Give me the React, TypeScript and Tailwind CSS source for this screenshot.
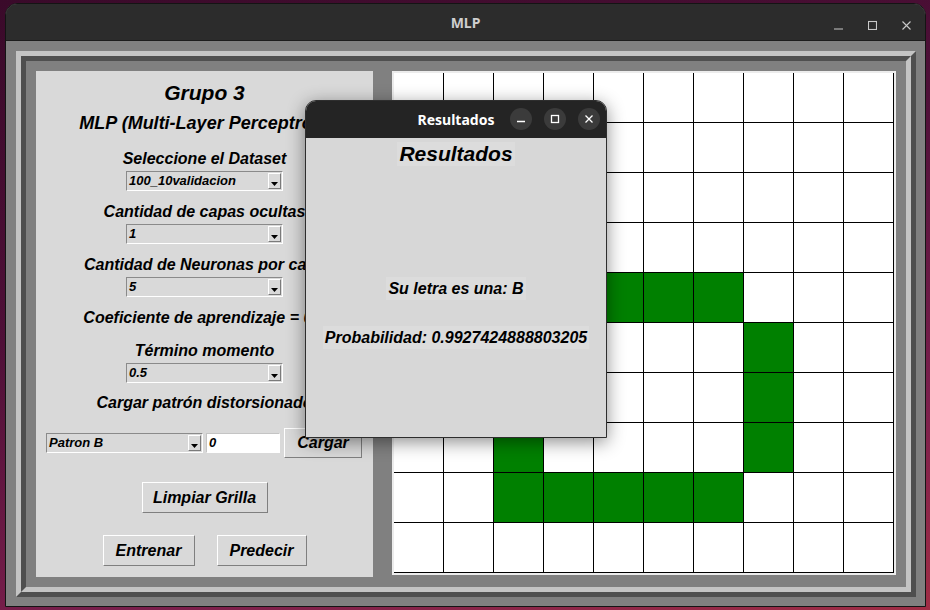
import React from "react";

const tk = "font-['Liberation_Sans',Arial,sans-serif] font-bold italic text-black";
const ui = "font-['Noto_Sans','Open_Sans',sans-serif] font-bold";

const green = new Set<string>([
  "1,2", "1,3",
  "2,2", "3,2",
  "4,2", "4,3", "4,4", "4,5", "4,6",
  "5,2", "6,2", "7,2",
  "5,7", "6,7", "7,7",
  "8,2", "8,3", "8,4", "8,5", "8,6",
]);

function Combo({ value }: { value: string }) {
  return (
    <div className="flex h-[20px] w-[157px] items-center border border-t-[#8a8a8a] border-l-[#8a8a8a] border-b-white border-r-white bg-[#d9d9d9]">
      <span className={`${tk} flex-1 pl-[2px] text-[13px] leading-[16px]`}>{value}</span>
      <div className="mr-[1px] flex h-[16px] w-[13px] items-end justify-center border border-t-white border-l-white border-b-[#7a7a7a] border-r-[#7a7a7a] pb-[2px]">
        <svg width="7" height="4" viewBox="0 0 7 4">
          <polygon points="0,0 7,0 3.5,4" fill="#000" />
        </svg>
      </div>
    </div>
  );
}

function Label({ text, className = "" }: { text: string; className?: string }) {
  return (
    <div className={`${tk} whitespace-nowrap text-center text-[16px] leading-[19px] ${className}`}>{text}</div>
  );
}

function TkButton({ text, w, h, className = "" }: { text: string; w: string; h: string; className?: string }) {
  return (
    <div
      className={`${tk} flex items-center justify-center border border-t-white border-l-white border-b-[#7f7f7f] border-r-[#7f7f7f] bg-[#d9d9d9] text-[16px] ${w} ${h} ${className}`}
    >
      {text}
    </div>
  );
}

function Grid() {
  const rows = Array.from({ length: 10 }, (_, r) => r);
  return (
    <div className="ml-[19px] h-[504px] w-[504px] border-2 border-[#ececec] bg-white">
      <div className="grid grid-cols-[repeat(10,50px)] grid-rows-[repeat(10,50px)]">
        {rows.map((r) =>
          rows.map((c) => (
            <div
              key={`${r}-${c}`}
              className={`border-b border-r border-black ${green.has(`${r},${c}`) ? "bg-[#008000]" : "bg-white"}`}
            />
          ))
        )}
      </div>
    </div>
  );
}

function LeftPanel() {
  return (
    <div className="ml-[10px] flex h-[506px] w-[337px] flex-col items-center overflow-hidden bg-[#d9d9d9]">
      <div className={`${tk} mt-[10px] text-[21px] leading-[24px]`}>Grupo 3</div>
      <div className={`${tk} mt-[8px] whitespace-nowrap text-[18px] leading-[21px]`}>MLP (Multi-Layer Perceptron)</div>

      <Label text="Seleccione el Dataset" className="mt-[15px]" />
      <div className="mt-[3px]"><Combo value="100_10validacion" /></div>

      <Label text="Cantidad de capas ocultas" className="mt-[11px]" />
      <div className="mt-[3px]"><Combo value="1" /></div>

      <Label text="Cantidad de Neuronas por capa" className="mt-[11px]" />
      <div className="mt-[3px]"><Combo value="5" /></div>

      <Label text="Coeficiente de aprendizaje = 0.1" className="mt-[11px]" />

      <Label text="Término momento" className="mt-[14px]" />
      <div className="mt-[3px]"><Combo value="0.5" /></div>

      <Label text="Cargar patrón distorsionado" className="mt-[10px]" />

      <div className="mt-[16px] flex w-full items-center pl-[10px]">
        <Combo value="Patron B" />
        <div className="ml-[3px] flex h-[20px] w-[74px] items-center border border-t-[#c4c4c4] border-l-[#c4c4c4] border-b-white border-r-white bg-white">
          <span className={`${tk} pl-[2px] text-[13px]`}>0</span>
        </div>
        <TkButton text="Cargar" w="w-[78px]" h="h-[30px]" className="ml-[4px]" />
      </div>

      <TkButton text="Limpiar Grilla" w="w-[126px]" h="h-[31px]" className="mt-[24px]" />

      <div className="mt-[22px] flex gap-[22px]">
        <TkButton text="Entrenar" w="w-[92px]" h="h-[31px]" />
        <TkButton text="Predecir" w="w-[90px]" h="h-[31px]" />
      </div>
    </div>
  );
}

function Popup() {
  return (
    <div className="absolute left-[305px] top-[100px] flex h-[338px] w-[302px] flex-col overflow-hidden rounded-t-[11px] border border-[#2e2e2e] bg-[#d7d7d7] shadow-[0_4px_18px_rgba(0,0,0,0.45)]">
      <div className="relative flex h-[37px] shrink-0 items-center justify-center bg-[#242424]">
        <span className={`${ui} text-[14px] text-white`}>Resultados</span>
        <div className="absolute right-[6px] top-[7px] flex gap-[12px]">
          <div className="flex h-[22px] w-[22px] items-center justify-center rounded-full bg-[#3b3b3b]">
            <svg width="10" height="10" viewBox="0 0 10 10"><line x1="1" y1="7.5" x2="9" y2="7.5" stroke="#fff" strokeWidth="1.3" /></svg>
          </div>
          <div className="flex h-[22px] w-[22px] items-center justify-center rounded-full bg-[#3b3b3b]">
            <svg width="10" height="10" viewBox="0 0 10 10"><rect x="1.5" y="1.5" width="7" height="7" fill="none" stroke="#fff" strokeWidth="1.3" /></svg>
          </div>
          <div className="flex h-[22px] w-[22px] items-center justify-center rounded-full bg-[#3b3b3b]">
            <svg width="10" height="10" viewBox="0 0 10 10"><path d="M1.5 1.5 L8.5 8.5 M8.5 1.5 L1.5 8.5" stroke="#fff" strokeWidth="1.3" /></svg>
          </div>
        </div>
      </div>
      <div className="flex flex-col items-center">
        <div className={`${tk} mt-[4px] bg-[#dcdcdc] px-[2px] text-[21px] leading-[24px]`}>Resultados</div>
        <div className={`${tk} mt-[111px] bg-[#dcdcdc] px-[2px] py-[2px] text-[16px] leading-[19px]`}>Su letra es una: B</div>
        <div className={`${tk} mt-[26px] bg-[#dcdcdc] px-[2px] py-[2px] text-[16px] leading-[19px]`}>Probabilidad: 0.9927424888803205</div>
      </div>
    </div>
  );
}

export default function App() {
  return (
    <div className="relative h-[610px] w-[930px] overflow-hidden bg-[linear-gradient(165deg,#3a0a2a_0%,#4f1038_40%,#7a1f4c_75%,#a02d45_100%)] pl-[5px] pt-[3px]">
      <div className="flex h-[604px] w-[921px] flex-col overflow-hidden rounded-t-[12px] border border-[#141414] bg-[#808080]">
        <div className="relative flex h-[37px] shrink-0 items-center justify-center border-b border-[#1c1c1c] bg-[#2c2c2c]">
          <span className={`${ui} text-[14px] text-[#cfcfcf]`}>MLP</span>
          <div className="absolute right-[14px] top-[16px] flex items-center gap-[25px]">
            <svg width="9" height="10" viewBox="0 0 9 10"><line x1="0" y1="9" x2="9" y2="9" stroke="#c8c8c8" strokeWidth="1.2" /></svg>
            <svg width="9" height="10" viewBox="0 0 9 10"><rect x="0.5" y="1.5" width="8" height="8" fill="none" stroke="#c8c8c8" strokeWidth="1.1" /></svg>
            <svg width="9" height="10" viewBox="0 0 9 10"><path d="M0.5 1.5 L8.5 9.5 M8.5 1.5 L0.5 9.5" stroke="#c8c8c8" strokeWidth="1.1" /></svg>
          </div>
        </div>
        <div className="pl-[10px] pt-[10px]">
          <div className="h-[546px] w-[900px] border-[5px] border-t-[#c4c4c4] border-l-[#c4c4c4] border-b-[#4f4f4f] border-r-[#4f4f4f]">
            <div className="flex h-full w-full items-start border-[5px] border-t-[#4f4f4f] border-l-[#4f4f4f] border-b-[#c4c4c4] border-r-[#c4c4c4] pt-[10px]">
              <LeftPanel />
              <Grid />
            </div>
          </div>
        </div>
      </div>
      <Popup />
    </div>
  );
}
